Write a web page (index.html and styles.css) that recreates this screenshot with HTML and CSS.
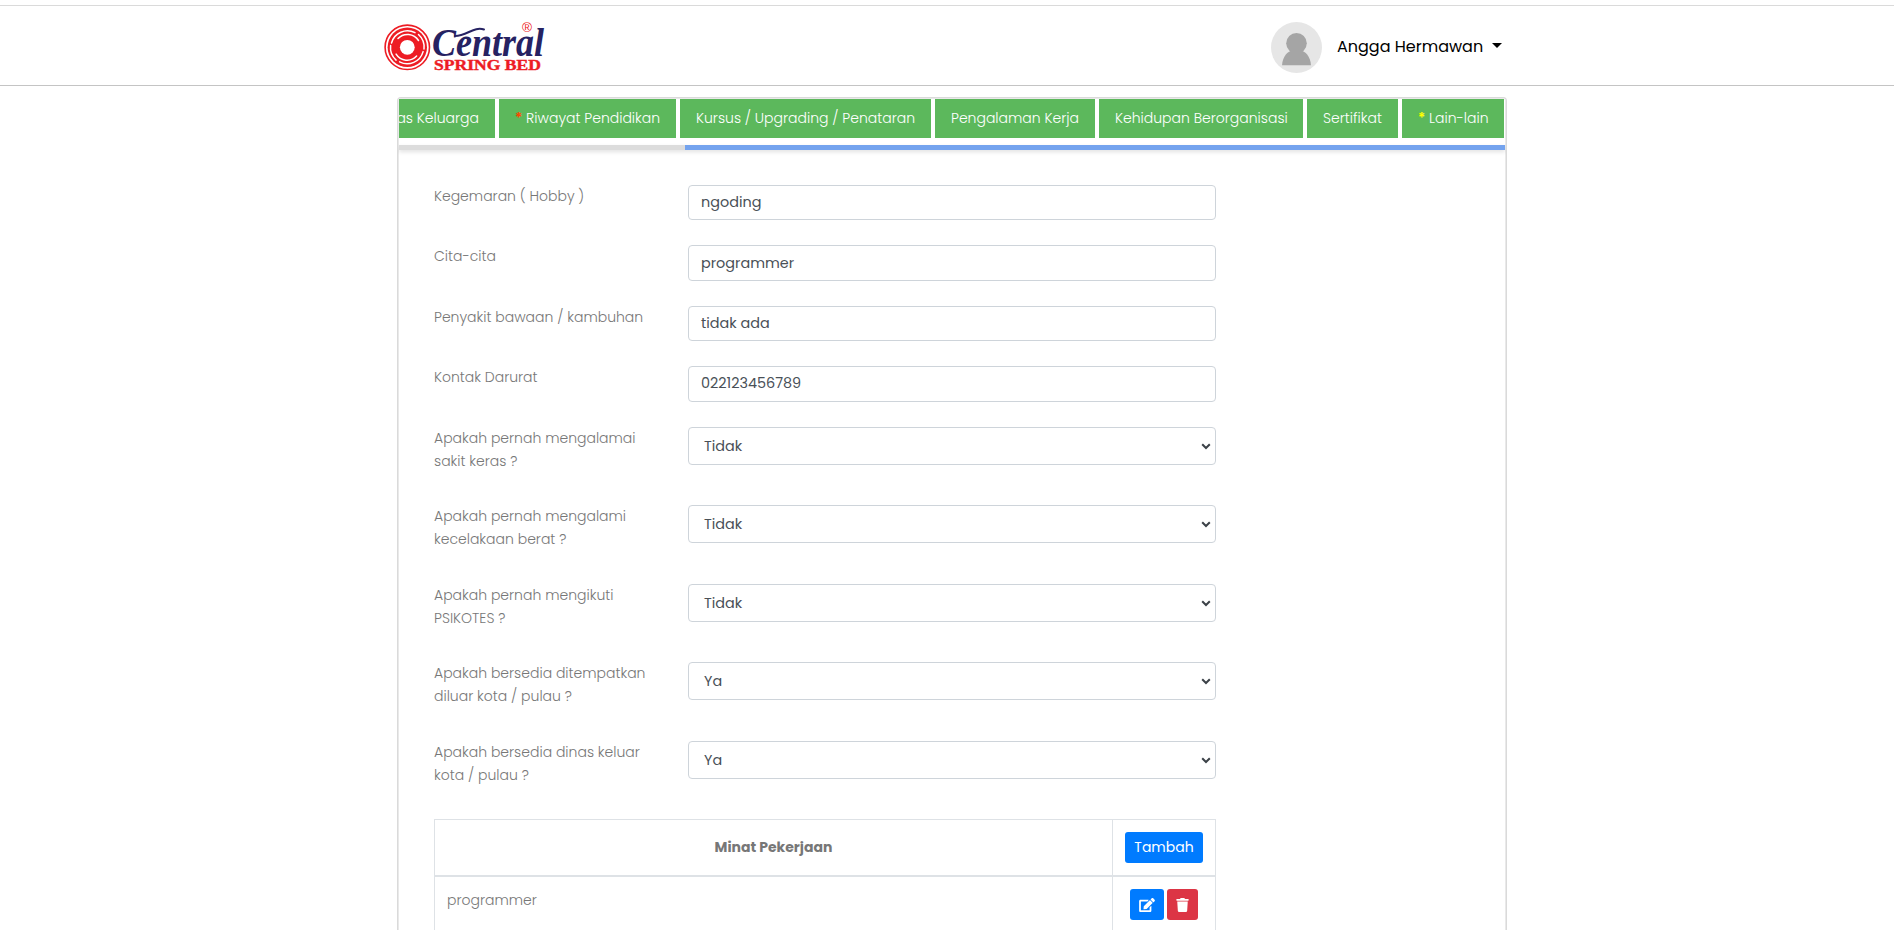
FILE: index.html
```
<!DOCTYPE html>
<html lang="id">
<head>
<meta charset="utf-8">
<title>Central Spring Bed</title>
<link rel="stylesheet" href="styles.css">
</head>
<body>
<header class="topbar">
  <svg class="logo" width="170" height="56" viewBox="380 20 170 56" aria-label="Central Spring Bed">
    <circle cx="407.300" cy="47.300" r="22.200" fill="#fff" stroke="#ed1c24" stroke-width="1.600"/>
    <circle cx="407.300" cy="47.300" r="19.700" fill="#ed1c24"/>
    <circle cx="407.300" cy="47.300" r="7.400" fill="#fff"/>
    <g fill="none" stroke="#fff" stroke-width="1.500" stroke-linecap="round">
      <path d="M391.500 43 A16.500 16.500 0 0 1 415 32.700"/>
      <path d="M398 38.500 A13 13 0 0 1 418.500 40.500"/>
      <path d="M391.500 43 A16.500 16.500 0 0 1 415 32.700" transform="rotate(180 407.300 47.300)"/>
      <path d="M398 38.500 A13 13 0 0 1 418.500 40.500" transform="rotate(180 407.300 47.300)"/>
      <path d="M418.500 34.500 A17 17 0 0 1 424 49"/>
      <path d="M418.500 34.500 A17 17 0 0 1 424 49" transform="rotate(180 407.300 47.300)"/>
    </g>
    <text class="logo-name" x="432" y="55.500" textLength="112" lengthAdjust="spacingAndGlyphs">Central</text>
    <path d="M455 36 C467 36 474 26 484 29.500" fill="none" stroke="#262262" stroke-width="2" stroke-linecap="round"/>
    <text class="logo-reg" x="522" y="32" textLength="10" lengthAdjust="spacingAndGlyphs">®</text>
    <text class="logo-sub" x="434" y="70" textLength="107" lengthAdjust="spacingAndGlyphs">SPRING BED</text>
  </svg>
  <div class="user">
    <svg width="51" height="51" viewBox="0 0 51 51">
      <circle cx="25.500" cy="25.500" r="25.500" fill="#e6e6e6"/>
      <circle cx="25.500" cy="21.300" r="10.300" fill="#a5a5a5"/>
      <path d="M11 43.300 C11.500 35 16.500 28.500 22 28.500 H29 C34.500 28.500 39.500 35 40 43.300 Z" fill="#a5a5a5"/>
    </svg>
    <span class="user-name">Angga Hermawan</span>
    <span class="caret"></span>
  </div>
</header>
<main class="card">
  <nav class="tabs">
    <a class="tab t1"><span>Identitas Keluarga</span></a>
    <a class="tab t2"><span><i class="req">*</i> Riwayat Pendidikan</span></a>
    <a class="tab t3"><span>Kursus / Upgrading / Penataran</span></a>
    <a class="tab t4"><span>Pengalaman Kerja</span></a>
    <a class="tab t5"><span>Kehidupan Berorganisasi</span></a>
    <a class="tab t6"><span>Sertifikat</span></a>
    <a class="tab t7"><span><i class="now">*</i> Lain-lain</span></a>
  </nav>
  <div class="scroll"><div class="thumb"></div></div>
  <form class="form">
    <div class="row"><label>Kegemaran ( Hobby )</label><div class="field">ngoding</div></div>
    <div class="row"><label>Cita-cita</label><div class="field">programmer</div></div>
    <div class="row"><label>Penyakit bawaan / kambuhan</label><div class="field">tidak ada</div></div>
    <div class="row"><label>Kontak Darurat</label><div class="field">022123456789</div></div>
    <div class="row tall"><label>Apakah pernah mengalamai<br>sakit keras ?</label><div class="field select">Tidak<svg width="10" height="7" viewBox="0 0 10 7"><path d="M1.200 1.200 L5 5 L8.800 1.200"/></svg></div></div>
    <div class="row tall"><label>Apakah pernah mengalami<br>kecelakaan berat ?</label><div class="field select">Tidak<svg width="10" height="7" viewBox="0 0 10 7"><path d="M1.200 1.200 L5 5 L8.800 1.200"/></svg></div></div>
    <div class="row tall"><label>Apakah pernah mengikuti<br>PSIKOTES ?</label><div class="field select">Tidak<svg width="10" height="7" viewBox="0 0 10 7"><path d="M1.200 1.200 L5 5 L8.800 1.200"/></svg></div></div>
    <div class="row tall"><label>Apakah bersedia ditempatkan<br>diluar kota / pulau ?</label><div class="field select">Ya<svg width="10" height="7" viewBox="0 0 10 7"><path d="M1.200 1.200 L5 5 L8.800 1.200"/></svg></div></div>
    <div class="row tall"><label>Apakah bersedia dinas keluar<br>kota / pulau ?</label><div class="field select">Ya<svg width="10" height="7" viewBox="0 0 10 7"><path d="M1.200 1.200 L5 5 L8.800 1.200"/></svg></div></div>
    <div class="table">
      <div class="th">Minat Pekerjaan</div>
      <div class="th last"><span class="btn add">Tambah</span></div>
      <div class="td">programmer</div>
      <div class="td last">
        <span class="btn edit"><svg width="16" height="14" viewBox="0 0 576 512"><path fill="#fff" d="M402.600 83.200l90.200 90.200c3.800 3.800 3.800 10 0 13.800L274.400 405.600l-92.800 10.300c-12.400 1.400-22.900-9.100-21.500-21.500l10.300-92.800L388.800 83.200c3.800-3.800 10-3.800 13.800 0zm162-22.900l-48.800-48.800c-15.200-15.200-39.900-15.200-55.200 0l-35.400 35.400c-3.800 3.800-3.800 10 0 13.800l90.200 90.200c3.800 3.800 10 3.800 13.800 0l35.400-35.400c15.200-15.300 15.200-40 0-55.200zM384 346.200V448H64V128h229.800c3.200 0 6.200-1.300 8.500-3.500l40-40c7.600-7.600 2.200-20.500-8.500-20.500H48C21.500 64 0 85.500 0 112v352c0 26.500 21.500 48 48 48h352c26.500 0 48-21.500 48-48V306.200c0-10.700-12.900-16-20.500-8.500l-40 40c-2.200 2.300-3.500 5.300-3.500 8.500z"/></svg></span>
        <span class="btn del"><svg width="13" height="14" viewBox="0 0 448 512"><path fill="#fff" d="M432 32H312l-9.400-18.700A24 24 0 0 0 281.100 0H166.800a23.700 23.700 0 0 0-21.400 13.300L136 32H16A16 16 0 0 0 0 48v32a16 16 0 0 0 16 16h416a16 16 0 0 0 16-16V48a16 16 0 0 0-16-16zM53.200 467a48 48 0 0 0 47.900 45h245.800a48 48 0 0 0 47.900-45L416 128H32z"/></svg></span>
      </div>
    </div>
  </form>
</main>
</body>
</html>
```
FILE: styles.css
```
* { box-sizing: border-box; }
html, body { height: 100%; }
body {
  margin: 0;
  padding-top: 5px;
  overflow: hidden;
  background: #fff;
  font-family: Poppins, "Open Sans", sans-serif;
  font-size: 14px;
  color: #777;
}
.topbar {
  height: 81px;
  border-top: 1px solid #dadada;
  border-bottom: 1px solid #c4c4c4;
  padding: 14px 392px 0 380px;
  display: flex;
  justify-content: space-between;
}
.logo-name { font: italic bold 40px "Liberation Serif", serif; fill: #262262; }
.logo-reg { font: 12px "Liberation Sans", sans-serif; fill: #ed1c24; }
.logo-sub { font: bold 14px "Liberation Serif", serif; fill: #ed1c24; stroke: #ed1c24; stroke-width: .4px; }
.user { display: flex; align-items: center; height: 55px; width: 231px; }
.user-name { margin: -2px 0 0 15px; width: 148px; white-space: nowrap; font-size: 16px; color: #000; }
.caret { margin: -4px 0 0 7px; border: 5px solid transparent; border-top-color: #000; border-bottom: 0; }
.card {
  width: 1110px;
  height: 833px;
  overflow: hidden;
  margin: 11px 0 0 397px;
  padding: 1px 1px 0;
  border: 1px solid #dadada;
  border-bottom: 0;
  border-radius: 4px 4px 0 0;
  box-shadow: inset 1px 1px #e9e9e9, inset -1px 0 #e9e9e9;
}
.tabs { display: flex; justify-content: flex-end; gap: 4px; height: 39px; padding-right: 1px; overflow: hidden; }
.tab {
  flex: none;
  height: 39px;
  padding: 0 16px;
  display: flex;
  align-items: center;
  background: #5cb85c;
  color: #fff;
  font-weight: 300;
  white-space: nowrap;
}
.tab i { font-style: normal; font-weight: 600; }
.req { color: #ff4500; }
.now { color: #ff0; }
.t1 { width: 160px; justify-content: flex-end; }
.t2 { width: 177px; }
.t3 { width: 251px; }
.t4 { width: 160px; }
.t5 { width: 204px; }
.t6 { width: 91px; }
.t7 { width: 102px; }
.scroll { height: 5px; margin-top: 7px; background: #dcdcdc; box-shadow: 0 2px 4px rgba(0, 0, 0, .12); }
.thumb { height: 5px; margin-left: 286px; background: #74a3ee; }
.form { padding: 35px 0 0 35px; }
.row { display: grid; grid-template-columns: 254px 528px; align-items: start; height: 60.400px; }
.row.tall { height: 78.500px; }
label { line-height: 23px; font-weight: 300; white-space: nowrap; }
.field {
  height: 35.400px;
  padding: 0 12px;
  border: 1px solid #ced4da;
  border-radius: 4px;
  display: flex;
  align-items: center;
  font-size: 14.400px;
  color: #495057;
}
.select { height: 38px; padding: 1px 4px 0 15px; justify-content: space-between; }
.select path { fill: none; stroke: #3c4248; stroke-width: 2; }
.table { display: grid; grid-template-columns: 677px 103px; width: 782px; border: 1px solid #dee2e6; border-bottom: 0; }
.th { height: 57px; border-bottom: 2px solid #dee2e6; display: flex; align-items: center; justify-content: center; font-weight: 700; }
.td { height: 120px; padding: 12px; line-height: 23px; font-weight: 300; }
.last { border-left: 1px solid #dee2e6; }
.td.last { display: flex; justify-content: center; gap: 3px; }
.btn { height: 31px; border-radius: 3px; display: flex; align-items: center; justify-content: center; color: #fff; font-weight: 400; background: #007bff; }
.add { width: 78px; }
.edit { width: 34px; flex: none; }
.del { width: 31px; flex: none; background: #dc3545; }
```
